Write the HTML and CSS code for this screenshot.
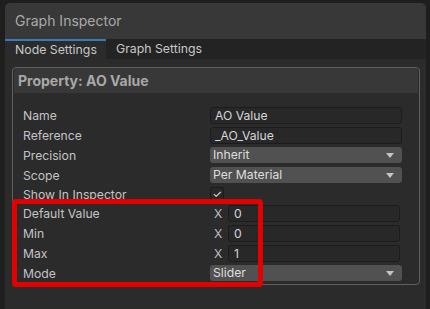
FILE: index.html
```html
<!DOCTYPE html>
<html lang="en">
<head>
  <meta charset="UTF-8">
  <title>Graph Inspector</title>
  <link rel="stylesheet" href="styles.css">
</head>
<body>
  <div class="window">
    <div class="title">Graph Inspector</div>
    <div class="tabs">
      <div class="tab active">Node Settings</div>
      <div class="tab">Graph Settings</div>
    </div>

    <div class="content">
      <div class="property">
        <div class="property-head">Property: AO Value</div>
        <div class="rows">
          <div class="row">
            <span class="label">Name</span>
            <div class="field">AO Value</div>
          </div>
          <div class="row">
            <span class="label">Reference</span>
            <div class="field">_AO_Value</div>
          </div>
          <div class="row">
            <span class="label">Precision</span>
            <div class="dropdown">Inherit<span class="arrow"></span></div>
          </div>
          <div class="row">
            <span class="label">Scope</span>
            <div class="dropdown">Per Material<span class="arrow"></span></div>
          </div>
          <div class="row short">
            <span class="label">Show In Inspector</span>
            <div class="checkbox">&#10003;</div>
          </div>

          <div class="marked">
            <div class="row">
              <span class="label">Default Value</span>
              <span class="axis">X</span>
              <div class="field num">0</div>
            </div>
            <div class="row">
              <span class="label">Min</span>
              <span class="axis">X</span>
              <div class="field num">0</div>
            </div>
            <div class="row">
              <span class="label">Max</span>
              <span class="axis">X</span>
              <div class="field num">1</div>
            </div>
            <div class="row">
              <span class="label">Mode</span>
              <div class="dropdown">Slider<span class="arrow"></span></div>
            </div>
          </div>
        </div>
      </div>
    </div>
  </div>
</body>
</html>
```

FILE: styles.css
```css
html, body {
  margin: 0;
  padding: 0;
  background-color: #1e1e1e;
  font-family: Inter, "Noto Sans", sans-serif;
  overflow: hidden;
}

.window {
  margin: 3px 4px 0 5px;
  height: 306px;
  background-color: #282828;
  border-radius: 5px 5px 0 0;
  overflow: hidden;
}

.title {
  height: 36px;
  line-height: 36px;
  padding-left: 10px;
  background-color: #383838;
  color: #a9a9a9;
  font-size: 14px;
}

.tabs {
  display: flex;
  height: 20px;
  background-color: #232323;
}

.tab {
  padding: 0 10px;
  line-height: 20px;
  font-size: 12.3px;
  color: #c8c8c8;
  white-space: nowrap;
}

.tab.active {
  width: 81px;
  background-color: #2b2b2b;
  border-top: 2px solid #3a79bb;
  line-height: 18px;
}

.content {
  background-color: #2b2b2b;
  height: 250px;
  padding: 8px 6px 0 7px;
}

.property {
  border: 1px solid #5f5f5f;
  border-radius: 4px;
  height: 216px;
  padding: 0;
}

.property-head {
  height: 25px;
  line-height: 25px;
  margin: 0 1px;
  padding-left: 4px;
  background-color: #383838;
  border-radius: 3px 3px 0 0;
  color: #a8a8a8;
  font-size: 14px;
  font-weight: bold;
}

.rows {
  padding: 12px 17px 0 10px;
}

.row {
  display: flex;
  align-items: center;
  height: 20px;
}

.row.short {
  height: 18px;
}

.label {
  width: 187px;
  font-size: 12.2px;
  color: #c4c4c4;
}

.field {
  flex: 1;
  height: 15px;
  line-height: 15px;
  padding-left: 4px;
  background-color: #282828;
  border: 1px solid #1c1c1c;
  border-radius: 3px;
  color: #d6d6d6;
  font-size: 12.2px;
}

.field.num {
  margin-right: 2px;
  padding-left: 5px;
}

.axis {
  width: 18px;
  padding-left: 4px;
  box-sizing: border-box;
  font-size: 12.2px;
  color: #bdbdbd;
}

.dropdown {
  flex: 1;
  position: relative;
  height: 16px;
  line-height: 16px;
  padding-left: 3px;
  background-color: #515151;
  border-radius: 3px;
  color: #dedede;
  font-size: 12.2px;
}

.arrow {
  position: absolute;
  right: 8px;
  top: 6px;
  border-left: 4px solid transparent;
  border-right: 4px solid transparent;
  border-top: 5px solid #c4c4c4;
}

.checkbox {
  width: 12px;
  height: 12px;
  line-height: 12px;
  text-align: center;
  background-color: #282828;
  border: 1px solid #1c1c1c;
  border-radius: 2px;
  color: #e6e6e6;
  font-size: 11px;
}

.marked {
  position: relative;
}

.marked::after {
  content: "";
  position: absolute;
  top: -4px;
  left: -11px;
  width: 241px;
  height: 78px;
  border: 5px solid #e30000;
  border-radius: 4px;
}
```
